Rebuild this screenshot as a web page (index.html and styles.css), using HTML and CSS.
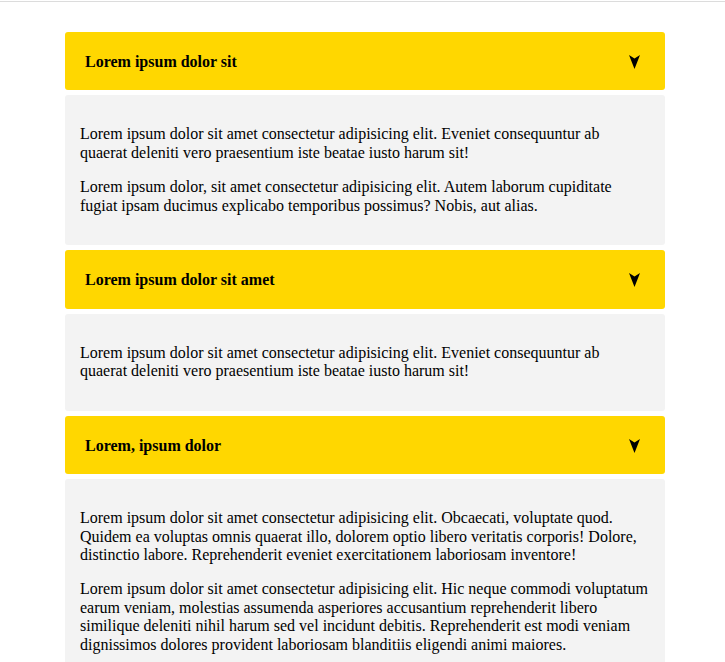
FILE: index.html
```html
<!DOCTYPE html>
<html>
<head>
<meta charset="utf-8">
<link rel="stylesheet" href="styles.css">
</head>
<body>
<div class="topline"></div>
<div class="accordion">
  <div class="item">
    <div class="head">
      <span class="title">Lorem ipsum dolor sit</span>
      <svg class="arrow" width="11" height="14" viewBox="0 0 11 14"><polygon points="0,0 5.5,3.5 11,0 5.5,14" fill="#000"/></svg>
    </div>
    <div class="body">
      <p>Lorem ipsum dolor sit amet consectetur adipisicing elit. Eveniet consequuntur ab quaerat deleniti vero praesentium iste beatae iusto harum sit!</p>
      <p>Lorem ipsum dolor, sit amet consectetur adipisicing elit. Autem laborum cupiditate fugiat ipsam ducimus explicabo temporibus possimus? Nobis, aut alias.</p>
    </div>
  </div>
  <div class="item">
    <div class="head">
      <span class="title">Lorem ipsum dolor sit amet</span>
      <svg class="arrow" width="11" height="14" viewBox="0 0 11 14"><polygon points="0,0 5.5,3.5 11,0 5.5,14" fill="#000"/></svg>
    </div>
    <div class="body">
      <p>Lorem ipsum dolor sit amet consectetur adipisicing elit. Eveniet consequuntur ab quaerat deleniti vero praesentium iste beatae iusto harum sit!</p>
    </div>
  </div>
  <div class="item">
    <div class="head">
      <span class="title">Lorem, ipsum dolor</span>
      <svg class="arrow" width="11" height="14" viewBox="0 0 11 14"><polygon points="0,0 5.5,3.5 11,0 5.5,14" fill="#000"/></svg>
    </div>
    <div class="body">
      <p>Lorem ipsum dolor sit amet consectetur adipisicing elit. Obcaecati, voluptate quod. Quidem ea voluptas omnis quaerat illo, dolorem optio libero veritatis corporis! Dolore, distinctio labore. Reprehenderit eveniet exercitationem laboriosam inventore!</p>
      <p>Lorem ipsum dolor sit amet consectetur adipisicing elit. Hic neque commodi voluptatum earum veniam, molestias assumenda asperiores accusantium reprehenderit libero similique deleniti nihil harum sed vel incidunt debitis. Reprehenderit est modi veniam dignissimos dolores provident laboriosam blanditiis eligendi animi maiores.</p>
    </div>
  </div>
</div>
</body>
</html>
```

FILE: styles.css
```css
html, body {
  margin: 0;
  padding: 0;
  background: #fff;
}
body {
  font-family: "Liberation Serif", "Times New Roman", serif;
  font-size: 16px;
  line-height: 1.15;
  color: #000;
}
.topline {
  margin-top: 1px;
  height: 1px;
  background: #dcdcdc;
}
.accordion {
  width: 600px;
  margin: 30px 0 0 65px;
  display: flex;
  flex-direction: column;
  gap: 5.4px;
}
.item {
  display: flex;
  flex-direction: column;
  gap: 5px;
}
.head {
  background: #ffd700;
  border-radius: 3px;
  padding: 21px 25px 19px 20px;
  display: flex;
  align-items: center;
  justify-content: space-between;
}
.title {
  font-weight: bold;
  font-size: 16px;
}
.arrow {
  display: block;
  margin-top: -1px;
}
.body {
  background: #f3f3f3;
  border-radius: 3px;
  padding: 14px 15px;
}
.body p {
  margin: 16px 0;
}
```
